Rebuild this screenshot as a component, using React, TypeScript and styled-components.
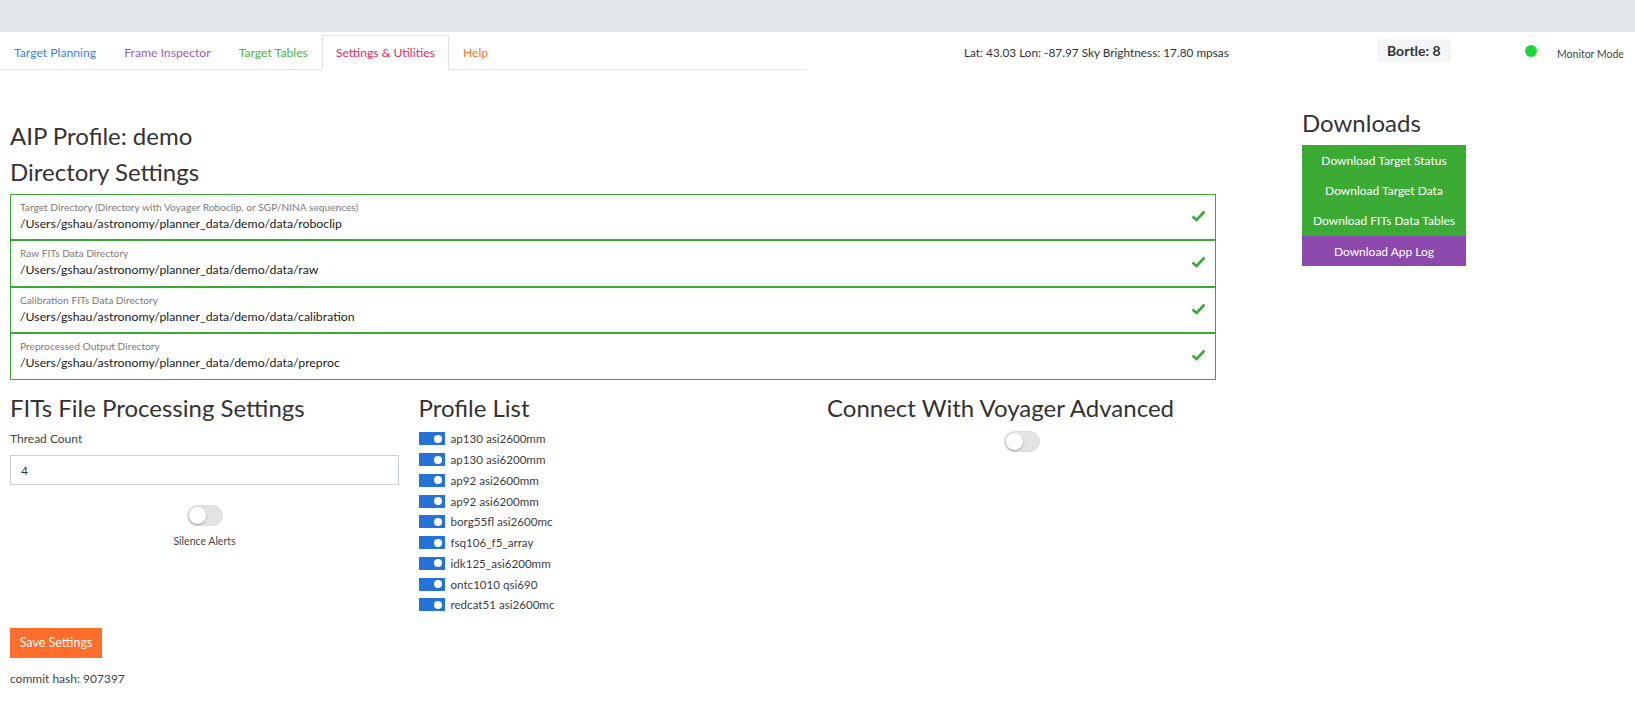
import styled, { createGlobalStyle } from 'styled-components';

const GlobalStyle = createGlobalStyle`
    html, body {
        margin: 0;
        padding: 0;
        background: #fff;
        font-family: 'Lato', 'Noto Sans', sans-serif;
        color: #333;
    }
    * {
        box-sizing: border-box;
    }
`;

const TopBar = styled.div`
    height: 32px;
    background: #e4e8eb;
`;

const Header = styled.div`
    display: flex;
    align-items: stretch;
    height: 38px;
    padding-top: 3px;
`;

const Tabs = styled.div`
    display: flex;
    width: 806px;
    border-bottom: 1px solid #dee2e6;
`;

const Tab = styled.div<{ $color: string; $active?: boolean }>`
    display: flex;
    align-items: center;
    padding: 0 13px;
    margin-bottom: -1px;
    font-size: 12.2px;
    color: ${({ $color }) => $color};
    border: 1px solid ${({ $active }) => ($active ? '#dee2e6' : 'transparent')};
    border-bottom-color: ${({ $active }) => ($active ? '#fff' : 'transparent')};
    background: ${({ $active }) => ($active ? '#fff' : 'transparent')};
    background-clip: padding-box;
`;

const Location = styled.div`
    display: flex;
    align-items: center;
    width: 571px;
    padding-left: 158px;
    font-size: 11.8px;
    color: #333;
`;

const BortleCell = styled.div`
    display: flex;
    align-items: center;
    width: 148px;
`;

const Bortle = styled.div`
    padding: 3px 10px;
    background: #f4f5f7;
    font-size: 14px;
    font-weight: 700;
    color: #333;
    margin-top: -4px;
`;

const StatusDot = styled.div`
    width: 12px;
    height: 12px;
    border-radius: 50%;
    background: #1ed63b;
    align-self: center;
    margin-top: -4px;
    margin-right: 20px;
`;

const MonitorLabel = styled.div`
    display: flex;
    align-items: center;
    font-size: 10.5px;
    color: #444;
    padding-top: 2px;
`;

const Main = styled.div`
    display: flex;
    gap: 86px;
    padding-left: 10px;
`;

const LeftCol = styled.div`
    width: 1206px;
    display: flex;
    flex-direction: column;
`;

const RightCol = styled.div`
    display: flex;
    flex-direction: column;
    width: 164px;
    padding-top: 38px;
`;

const Heading = styled.div<{ $mt?: number }>`
    font-size: 24px;
    line-height: 29px;
    color: #333;
    margin-top: ${({ $mt }) => $mt ?? 0}px;
`;

const DirList = styled.div`
    display: flex;
    flex-direction: column;
    margin-top: 8px;
`;

const DirBox = styled.div`
    position: relative;
    height: 46.5px;
    padding: 6px 9px 0;
    border: 1px solid #3aa935;
`;

const DirLabel = styled.div`
    font-size: 10.2px;
    line-height: 13px;
    color: #7a7a7a;
`;

const DirValue = styled.div`
    font-size: 12.3px;
    line-height: 19px;
    color: #222;
`;

const Check = styled.svg`
    position: absolute;
    right: 9px;
    top: 15px;
`;

const DownloadGroup = styled.div`
    display: flex;
    flex-direction: column;
    margin-top: 8px;
`;

const DownloadButton = styled.div<{ $bg: string }>`
    height: 30.3px;
    display: flex;
    align-items: center;
    justify-content: center;
    background: ${({ $bg }) => $bg};
    color: #fff;
    font-size: 12px;
`;

const Columns = styled.div`
    display: grid;
    grid-template-columns: 389px 389px 389px;
    column-gap: 19.5px;
    margin-top: 13px;
`;

const Column = styled.div`
    display: flex;
    flex-direction: column;
`;

const FieldLabel = styled.div`
    font-size: 12px;
    line-height: 16px;
    margin-top: 9.5px;
    color: #444;
`;

const Input = styled.div`
    margin-top: 8px;
    height: 30px;
    border: 1px solid #c9d0d8;
    padding: 0 10px;
    display: flex;
    align-items: center;
    font-size: 12px;
    color: #333;
`;

const SwitchWrap = styled.div<{ $mt: number }>`
    display: flex;
    flex-direction: column;
    align-items: center;
    margin-top: ${({ $mt }) => $mt}px;
`;

const OffSwitch = styled.div`
    position: relative;
    width: 36px;
    height: 21px;
    border-radius: 11px;
    background: #e3e3e3;
    border: 1px solid #dcdcdc;

    &::after {
        content: '';
        position: absolute;
        left: 1px;
        top: 1px;
        width: 17px;
        height: 17px;
        border-radius: 50%;
        background: #fff;
        box-shadow: 0 1px 2px rgba(0, 0, 0, 0.3);
    }
`;

const SwitchLabel = styled.div`
    margin-top: 8.5px;
    font-size: 10.5px;
    line-height: 14px;
    color: #444;
`;

const SaveButton = styled.div`
    margin-top: 79.5px;
    width: 92px;
    height: 30.5px;
    display: flex;
    align-items: center;
    justify-content: center;
    background: #fd6d2b;
    color: #fff;
    font-size: 12.5px;
`;

const Commit = styled.div`
    margin-top: 13px;
    font-size: 12px;
    line-height: 16px;
    color: #444;
`;

const ProfileList = styled.div`
    display: flex;
    flex-direction: column;
    margin-top: 7px;
`;

const ProfileRow = styled.div`
    display: flex;
    align-items: center;
    height: 20.75px;
    gap: 6px;
    font-size: 11.6px;
    color: #3d3d3d;
`;

const OnSwitch = styled.div`
    position: relative;
    width: 26px;
    height: 13px;
    background: #2673d8;

    &::after {
        content: '';
        position: absolute;
        right: 3px;
        top: 2.5px;
        width: 8px;
        height: 8px;
        border-radius: 50%;
        background: #fff;
    }
`;

const dirs = [
    {
        label: 'Target Directory (Directory with Voyager Roboclip, or SGP/NINA sequences)',
        value: '/Users/gshau/astronomy/planner_data/demo/data/roboclip',
    },
    { label: 'Raw FITs Data Directory', value: '/Users/gshau/astronomy/planner_data/demo/data/raw' },
    {
        label: 'Calibration FITs Data Directory',
        value: '/Users/gshau/astronomy/planner_data/demo/data/calibration',
    },
    { label: 'Preprocessed Output Directory', value: '/Users/gshau/astronomy/planner_data/demo/data/preproc' },
];

const profiles = [
    'ap130 asi2600mm',
    'ap130 asi6200mm',
    'ap92 asi2600mm',
    'ap92 asi6200mm',
    'borg55fl asi2600mc',
    'fsq106_f5_array',
    'idk125_asi6200mm',
    'ontc1010 qsi690',
    'redcat51 asi2600mc',
];

const tabs = [
    { name: 'Target Planning', color: '#3f7fe0' },
    { name: 'Frame Inspector', color: '#9a5cbf' },
    { name: 'Target Tables', color: '#4fb045' },
    { name: 'Settings & Utilities', color: '#ef2a52', active: true },
    { name: 'Help', color: '#fa7a35' },
];

const App = () => {
    return (
        <>
            <GlobalStyle />
            <TopBar />
            <Header>
                <Tabs>
                    {tabs.map((tab) => (
                        <Tab key={tab.name} $color={tab.color} $active={tab.active}>
                            {tab.name}
                        </Tab>
                    ))}
                </Tabs>
                <Location>Lat: 43.03 Lon: -87.97 Sky Brightness: 17.80 mpsas</Location>
                <BortleCell>
                    <Bortle>Bortle: 8</Bortle>
                </BortleCell>
                <StatusDot />
                <MonitorLabel>Monitor Mode</MonitorLabel>
            </Header>
            <Main>
                <LeftCol>
                    <Heading $mt={50.5}>AIP Profile: demo</Heading>
                    <Heading $mt={7}>Directory Settings</Heading>
                    <DirList>
                        {dirs.map((dir) => (
                            <DirBox key={dir.label}>
                                <DirLabel>{dir.label}</DirLabel>
                                <DirValue>{dir.value}</DirValue>
                                <Check width="15" height="12" viewBox="0 0 15 12">
                                    <path d="M1.5 6.5 L5.5 10 L13.5 1.5" fill="none" stroke="#3aa935" strokeWidth="2.6" />
                                </Check>
                            </DirBox>
                        ))}
                    </DirList>
                    <Columns>
                        <Column>
                            <Heading>FITs File Processing Settings</Heading>
                            <FieldLabel>Thread Count</FieldLabel>
                            <Input>4</Input>
                            <SwitchWrap $mt={19.5}>
                                <OffSwitch />
                                <SwitchLabel>Silence Alerts</SwitchLabel>
                            </SwitchWrap>
                            <SaveButton>Save Settings</SaveButton>
                            <Commit>commit hash: 907397</Commit>
                        </Column>
                        <Column>
                            <Heading>Profile List</Heading>
                            <ProfileList>
                                {profiles.map((p) => (
                                    <ProfileRow key={p}>
                                        <OnSwitch />
                                        {p}
                                    </ProfileRow>
                                ))}
                            </ProfileList>
                        </Column>
                        <Column>
                            <Heading>Connect With Voyager Advanced</Heading>
                            <SwitchWrap $mt={9}>
                                <OffSwitch />
                            </SwitchWrap>
                        </Column>
                    </Columns>
                </LeftCol>
                <RightCol>
                    <Heading>Downloads</Heading>
                    <DownloadGroup>
                        <DownloadButton $bg="#3cab35">Download Target Status</DownloadButton>
                        <DownloadButton $bg="#3cab35">Download Target Data</DownloadButton>
                        <DownloadButton $bg="#3cab35">Download FITs Data Tables</DownloadButton>
                        <DownloadButton $bg="#8d4aae">Download App Log</DownloadButton>
                    </DownloadGroup>
                </RightCol>
            </Main>
        </>
    );
};

export default App;
